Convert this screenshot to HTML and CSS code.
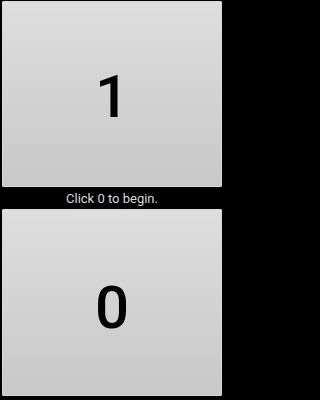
FILE: index.html
```html
<!DOCTYPE html>
<html>
<head>
<meta charset="utf-8">
<link rel="stylesheet" href="styles.css">
</head>
<body>
<div class="screen">
  <button class="key key-top">1</button>
  <div class="status">Click 0 to begin.</div>
  <button class="key key-bottom">0</button>
</div>
</body>
</html>
```
FILE: styles.css
```css
html, body {
  margin: 0;
  padding: 0;
  background: #000;
}
.screen {
  width: 225px;
  height: 400px;
  box-sizing: border-box;
  padding: 1px 3px 4px 2px;
  display: flex;
  flex-direction: column;
}
.key {
  flex: none;
  box-sizing: border-box;
  margin: 0;
  border: 1px solid #d8d8d8;
  border-radius: 1px;
  background: linear-gradient(to bottom, #dedede, #c8c8c8);
  color: #000;
  font-family: Roboto, "Noto Sans", sans-serif;
  font-size: 60px;
  font-weight: 500;
  line-height: 1;
  display: flex;
  align-items: center;
  justify-content: center;
}
.key-top {
  height: 186px;
  padding: 5px 0 0 0;
}
.key-bottom {
  height: 187px;
  padding: 11px 0 0 0;
}
.status {
  height: 22px;
  flex: none;
  display: flex;
  align-items: center;
  justify-content: center;
  color: #dadada;
  font-family: Roboto, "Noto Sans", sans-serif;
  font-size: 13px;
}
```
